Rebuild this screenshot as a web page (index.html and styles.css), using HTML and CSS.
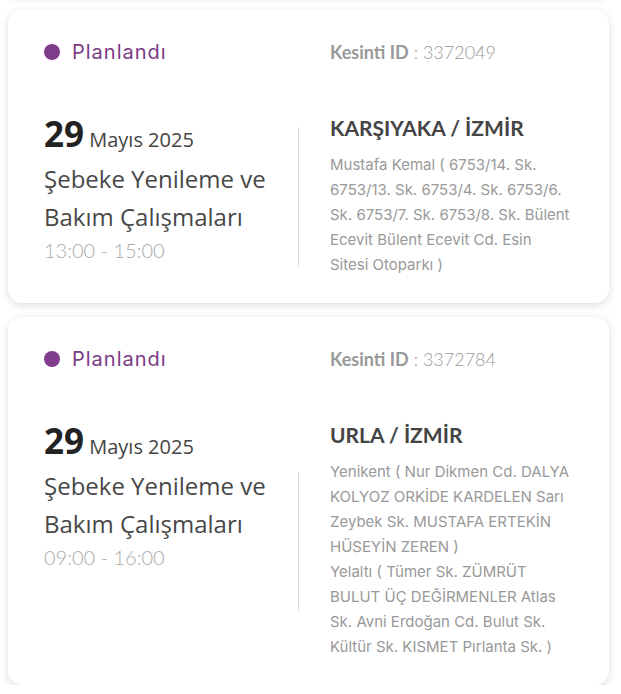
FILE: index.html
```html
<!DOCTYPE html>
<html lang="tr">
<head>
<meta charset="utf-8">
<link rel="stylesheet" href="styles.css">
</head>
<body>
<div class="list">
  <div class="card prev"></div>

  <div class="card">
    <div class="status"><span class="dot"></span>Planlandı</div>
    <div class="outage-id"><b>Kesinti ID</b> : 3372049</div>
    <div class="when">
      <div class="date"><span class="day">29</span> Mayıs 2025</div>
      <div class="title">Şebeke Yenileme ve Bakım Çalışmaları</div>
      <div class="time">13:00 - 15:00</div>
    </div>
    <div class="divider"></div>
    <div class="where">
      <div class="place">KARŞIYAKA / İZMİR</div>
      <div class="streets">Mustafa Kemal ( 6753/14. Sk. 6753/13. Sk. 6753/4. Sk. 6753/6. Sk. 6753/7. Sk. 6753/8. Sk. Bülent Ecevit Bülent Ecevit Cd. Esin Sitesi Otoparkı )</div>
    </div>
  </div>

  <div class="card">
    <div class="status"><span class="dot"></span>Planlandı</div>
    <div class="outage-id"><b>Kesinti ID</b> : 3372784</div>
    <div class="when">
      <div class="date"><span class="day">29</span> Mayıs 2025</div>
      <div class="title">Şebeke Yenileme ve Bakım Çalışmaları</div>
      <div class="time">09:00 - 16:00</div>
    </div>
    <div class="divider"></div>
    <div class="where">
      <div class="place">URLA / İZMİR</div>
      <div class="streets">Yenikent ( Nur Dikmen Cd. DALYA KOLYOZ ORKİDE KARDELEN Sarı Zeybek Sk. MUSTAFA ERTEKİN HÜSEYİN ZEREN )</div>
      <div class="streets">Yelaltı ( Tümer Sk. ZÜMRÜT BULUT ÜÇ DEĞİRMENLER Atlas Sk. Avni Erdoğan Cd. Bulut Sk. Kültür Sk. KISMET Pırlanta Sk. )</div>
    </div>
  </div>
</div>
</body>
</html>
```

FILE: styles.css
```css
* { box-sizing: border-box; }
html, body { margin: 0; padding: 0; background: #ffffff; }
body { overflow: hidden; }
.list {
  width: 601px;
  margin-left: 8px;
  display: flex;
  flex-direction: column;
  gap: 14px;
}
.card {
  background: #fff;
  border-radius: 14px;
  box-shadow: 0 2px 8px rgba(0,0,0,0.14);
  display: grid;
  grid-template-columns: 254px 1px 1fr;
  grid-template-rows: auto auto;
  padding: 30px 35px 26px 36px;
}
.card.prev {
  display: block;
  height: 20px;
  margin-top: -24px;
  padding: 0;
}
.status {
  grid-column: 1 / 3;
  display: flex;
  align-items: center;
  font-family: "Inter", "Lato", sans-serif;
  font-size: 20px;
  line-height: 24px;
  letter-spacing: 1px;
  color: #7a3b86;
}
.dot {
  width: 16px;
  height: 16px;
  border-radius: 50%;
  background: #7f3d8c;
  margin-right: 12px;
}
.outage-id {
  grid-column: 3;
  padding-left: 31px;
  font-family: "Lato", "Inter", sans-serif;
  font-size: 18px;
  line-height: 24px;
  color: #9a9a9a;
  font-weight: 300;
}
.outage-id b { font-weight: 700; color: #999; }
.when {
  grid-column: 1;
  grid-row: 2;
  padding-top: 50px;
}
.date {
  font-family: "Open Sans", sans-serif;
  color: #444;
  font-size: 20px;
  line-height: 40px;
}
.day {
  font-size: 35px;
  font-weight: 700;
  color: #222;
}
.title {
  font-family: "Open Sans", sans-serif;
  font-size: 24px;
  line-height: 38px;
  color: #484848;
}
.time {
  font-family: "Lato", sans-serif;
  font-size: 20px;
  line-height: 28px;
  color: #aaa;
  font-weight: 300;
}
.divider {
  grid-column: 2;
  grid-row: 2;
  align-self: center;
  width: 1px;
  height: 139px;
  background: #dcdcdc;
  margin-top: 52px;
}
.where {
  grid-column: 3;
  grid-row: 2;
  padding-left: 31px;
  padding-top: 49px;
}
.place {
  font-family: "Lato", sans-serif;
  font-size: 21px;
  font-weight: 700;
  line-height: 30px;
  color: #444;
  margin-bottom: 9px;
}
.streets {
  font-family: "Inter", sans-serif;
  font-size: 15px;
  line-height: 25px;
  color: #999;
}
```
